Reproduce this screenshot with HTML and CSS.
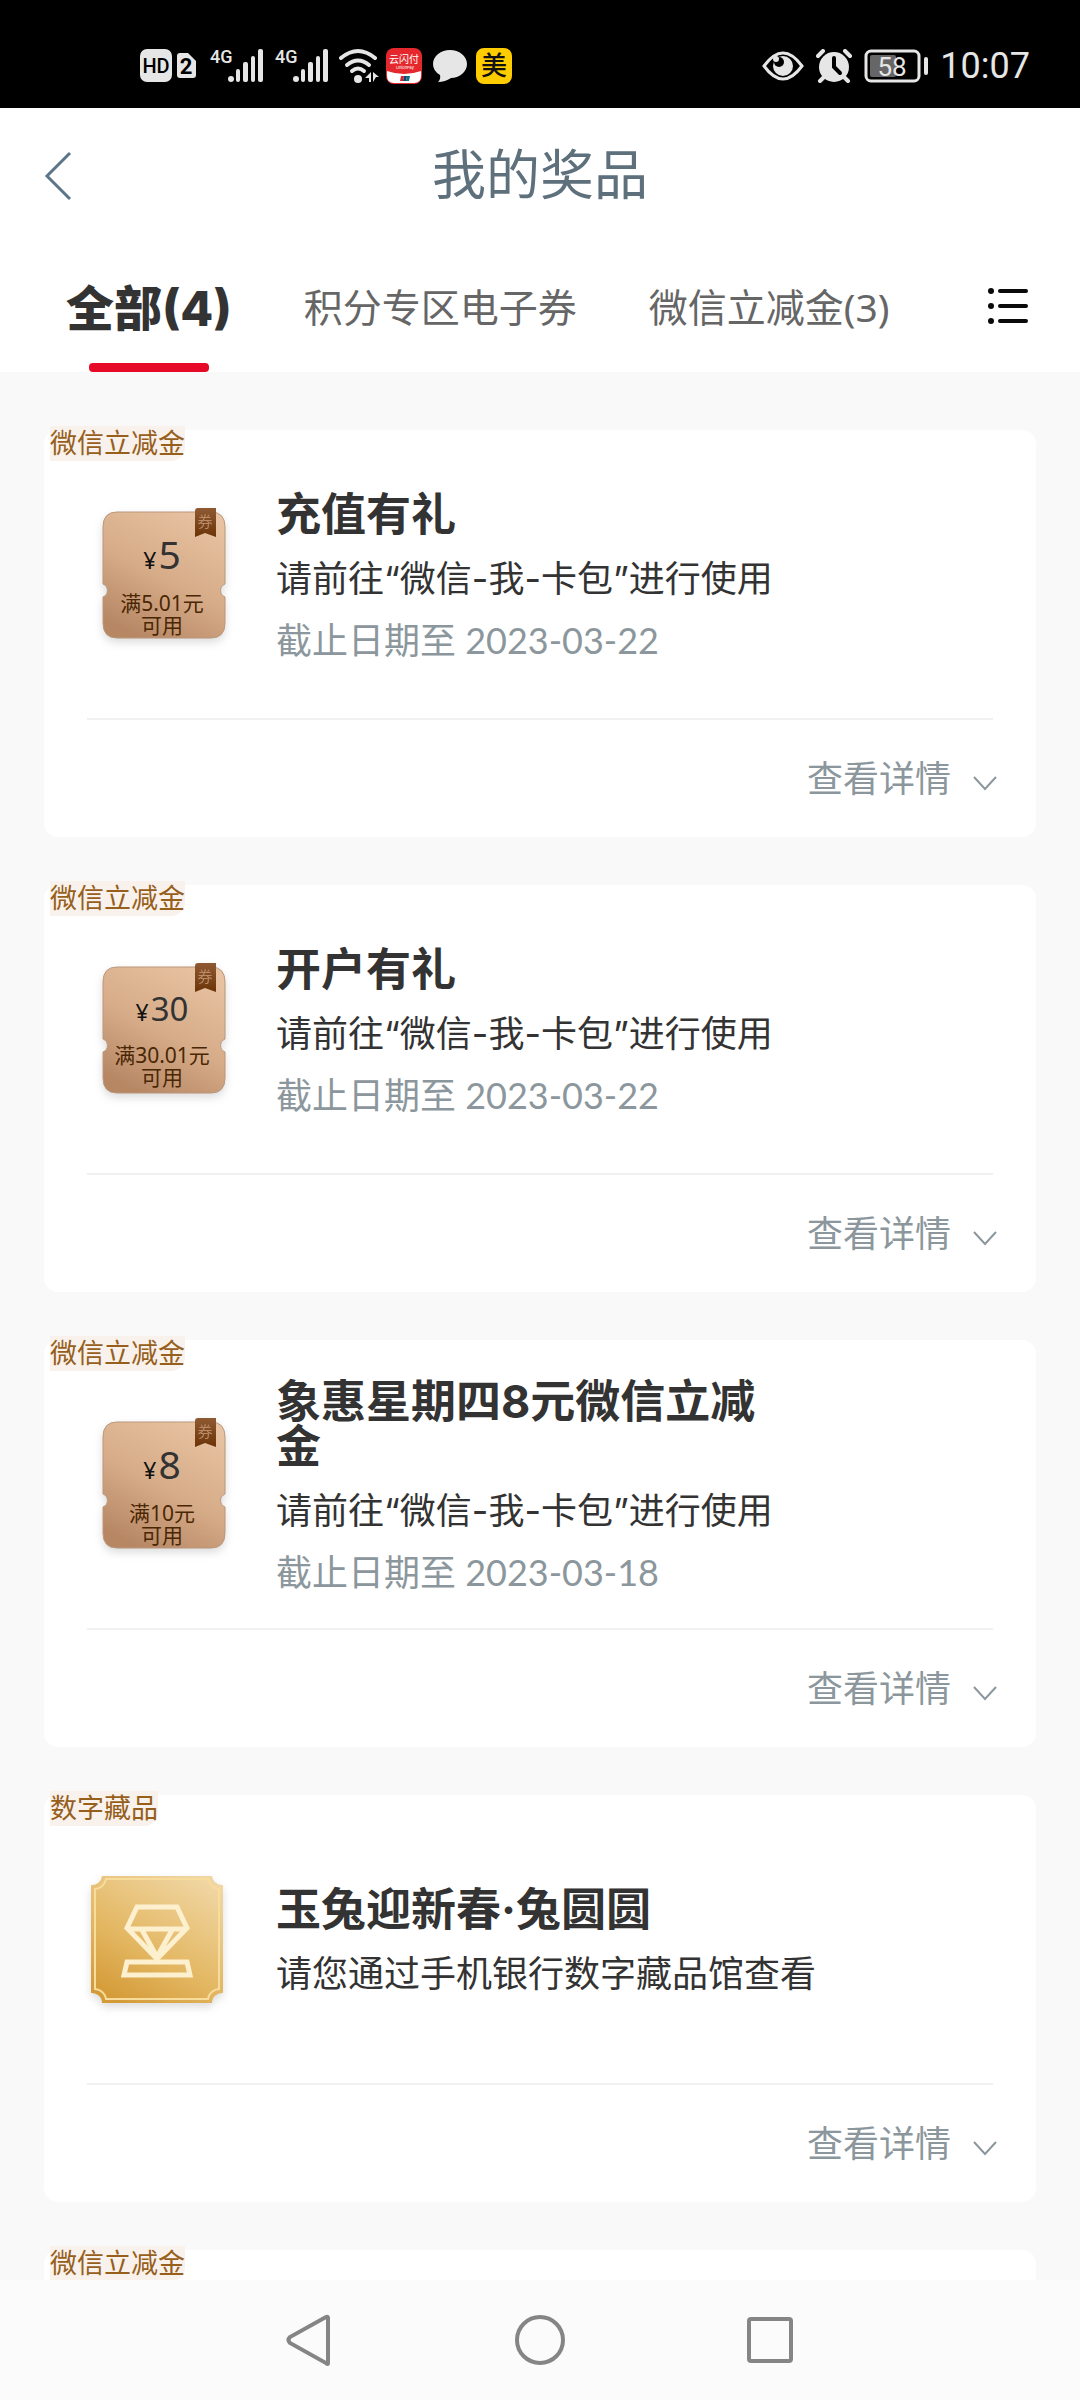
FILE: index.html
```html
<!DOCTYPE html>
<html lang="zh-CN">
<head>
<meta charset="utf-8">
<meta name="viewport" content="width=device-width, initial-scale=1">
<title>我的奖品</title>
<link rel="stylesheet" href="styles.css">
</head>
<body>
<svg class="defs" width="0" height="0" aria-hidden="true">
  <defs>
    <linearGradient id="copper" x1="0.8" y1="0" x2="0.3" y2="1">
      <stop offset="0" stop-color="#e8c3a2"/>
      <stop offset="0.55" stop-color="#d6ab88"/>
      <stop offset="1" stop-color="#b78764"/>
    </linearGradient>
    <linearGradient id="ribbon" x1="0" y1="0" x2="0" y2="1">
      <stop offset="0" stop-color="#8f5a33"/>
      <stop offset="1" stop-color="#6b3407"/>
    </linearGradient>
    <linearGradient id="gold" x1="0.8" y1="0" x2="0.2" y2="1">
      <stop offset="0" stop-color="#f0d6a3"/>
      <stop offset="0.6" stop-color="#e3b762"/>
      <stop offset="1" stop-color="#d49a37"/>
    </linearGradient>
    <symbol id="ticket" viewBox="0 0 140 150">
      <path d="M30 13H124Q138 13 138 28V85A7 7 0 0 0 138 98V124Q138 139 124 139H30Q16 139 16 124V98A7 7 0 0 0 16 85V28Q16 13 30 13Z" fill="url(#copper)" stroke="#b9977c" stroke-width="1"/>
      <path d="M108 12Q108 9 111 9H129V38L118 34L108 38Z" fill="url(#ribbon)"/>
    </symbol>
    <symbol id="signal" viewBox="0 0 54 36">
      <g fill="#e6e6e6"><circle cx="21" cy="31" r="3"/><rect x="26" y="21" width="4" height="13" rx="2"/><rect x="33" y="14" width="5" height="20" rx="2"/><rect x="41" y="8" width="4" height="26" rx="2"/><rect x="48" y="1" width="5" height="33" rx="2"/></g>
      <text x="0" y="15" class="net">4G</text>
    </symbol>
    <symbol id="chevron" viewBox="0 0 24 16"><path d="M1 1L12 13L23 1" fill="none" stroke="#8b979c" stroke-width="2"/></symbol>
  </defs>
</svg>

<div class="status">
  <div class="status-left">
    <svg width="56" height="34" viewBox="0 0 56 34"><rect width="32" height="33" rx="7" fill="#e6e6e6"/><text x="16" y="24" text-anchor="middle" class="hd">HD</text><path d="M42 4H48L56 12V26Q56 29 53 29H40Q37 29 37 26V7Q37 4 40 4Z" fill="#e6e6e6"/><text x="46" y="25" text-anchor="middle" class="sim">2</text></svg>
    <svg class="sig" width="54" height="36"><use href="#signal"/></svg>
    <svg class="sig2" width="54" height="36"><use href="#signal"/></svg>
    <svg class="wifi" width="40" height="36" viewBox="0 0 40 36"><g fill="none" stroke="#e6e6e6" stroke-width="4" stroke-linecap="round"><path d="M2 10Q19 -4 36 10"/><path d="M8 17Q19 8 30 17"/><path d="M13 23Q19 18 25 23"/></g><circle cx="19" cy="31" r="4" fill="#e6e6e6"/><path d="M32 24V34H30V30H26ZM34 24L40 29H37L34 34Z" fill="#e6e6e6"/></svg>
    <svg class="app" width="36" height="36" viewBox="0 0 36 36"><rect width="36" height="36" rx="8" fill="#e5282d"/><path d="M1 23Q18 29 35 23V28Q35 35 28 35H8Q1 35 1 28Z" fill="#fff"/><text x="18" y="15" text-anchor="middle" class="ysf">云闪付</text><text x="19" y="21" text-anchor="middle" class="uni">UnionPay</text><path d="M15 28H18L17 33H14Z" fill="#d22"/><path d="M18 28H21L20 33H17Z" fill="#16407c"/><path d="M21 28H24L23 33H20Z" fill="#0d7377"/></svg>
    <svg class="bubble" width="34" height="34" viewBox="0 0 34 34"><path d="M17 1C26 1 34 7 34 15C34 23 26 29 18 29Q12 33 5 33Q8 30 7 26Q0 22 0 15C0 7 8 1 17 1Z" fill="#e6e6e6"/></svg>
    <span class="mei">美</span>
  </div>
  <div class="status-right">
    <svg width="42" height="30" viewBox="0 0 42 30"><path d="M2 15Q21 -11 40 15Q21 41 2 15Z" fill="none" stroke="#e6e6e6" stroke-width="3"/><circle cx="21" cy="15" r="10" fill="#e6e6e6"/><circle cx="17" cy="11" r="5" fill="#000"/><circle cx="14" cy="8" r="3" fill="#e6e6e6"/></svg>
    <svg width="36" height="34" viewBox="0 0 36 34"><circle cx="18" cy="18" r="15" fill="#e6e6e6"/><path d="M2 7L7 2M34 7L29 2M8 28L4 32M28 28L32 32" stroke="#e6e6e6" stroke-width="4" stroke-linecap="round"/><path d="M18 9V18L24 24" fill="none" stroke="#000" stroke-width="4" stroke-linecap="round"/></svg>
    <svg width="64" height="34" viewBox="0 0 64 34"><rect x="2" y="2" width="53" height="30" rx="5" fill="none" stroke="#e6e6e6" stroke-width="3"/><rect x="6" y="6" width="26" height="22" rx="2" fill="#666"/><rect x="60" y="8" width="4" height="18" rx="2" fill="#e6e6e6"/><text x="28" y="27" text-anchor="middle" class="batt">58</text></svg>
    <span class="clock">10:07</span>
  </div>
</div>

<header class="header">
  <button class="back" aria-label="返回"><svg width="28" height="50" viewBox="0 0 28 50"><path d="M26 2L3 25L26 48" fill="none" stroke="#5b768a" stroke-width="3"/></svg></button>
  <h1>我的奖品</h1>
</header>
<nav class="tabs">
  <button class="tab active">全部(4)</button>
  <button class="tab">积分专区电子券</button>
  <button class="tab">微信立减金(3)</button>
  <button class="menu" aria-label="分类"><svg width="40" height="38" viewBox="0 0 40 38"><g fill="#0a0a0a"><circle cx="3" cy="4" r="3"/><circle cx="3" cy="19" r="3"/><circle cx="3" cy="34" r="3"/><rect x="10" y="2" width="30" height="4" rx="2"/><rect x="10" y="17" width="30" height="4" rx="2"/><rect x="10" y="32" width="30" height="4" rx="2"/></g></svg></button>
</nav>

<main class="list">
  <article class="card">
    <span class="tag">微信立减金</span>
    <div class="body">
      <div class="icon">
        <svg class="shape" viewBox="0 0 140 150"><use href="#ticket"/><text x="118" y="28" text-anchor="middle" class="quan">券</text></svg>
        <div class="face"><p class="amount">¥<b>5</b></p><p class="cond">满5.01元<br>可用</p></div>
      </div>
      <div class="info"><h2>充值有礼</h2><p>请前往“微信-我-卡包”进行使用</p><p class="date">截止日期至 2023-03-22</p></div>
    </div>
    <div class="foot"><button class="more">查看详情<svg width="24" height="16"><use href="#chevron"/></svg></button></div>
  </article>
  <article class="card">
    <span class="tag">微信立减金</span>
    <div class="body">
      <div class="icon">
        <svg class="shape" viewBox="0 0 140 150"><use href="#ticket"/><text x="118" y="28" text-anchor="middle" class="quan">券</text></svg>
        <div class="face"><p class="amount">¥<b class="long">30</b></p><p class="cond">满30.01元<br>可用</p></div>
      </div>
      <div class="info"><h2>开户有礼</h2><p>请前往“微信-我-卡包”进行使用</p><p class="date">截止日期至 2023-03-22</p></div>
    </div>
    <div class="foot"><button class="more">查看详情<svg width="24" height="16"><use href="#chevron"/></svg></button></div>
  </article>
  <article class="card">
    <span class="tag">微信立减金</span>
    <div class="body">
      <div class="icon">
        <svg class="shape" viewBox="0 0 140 150"><use href="#ticket"/><text x="118" y="28" text-anchor="middle" class="quan">券</text></svg>
        <div class="face"><p class="amount">¥<b>8</b></p><p class="cond">满10元<br>可用</p></div>
      </div>
      <div class="info"><h2>象惠星期四8元微信立减金</h2><p>请前往“微信-我-卡包”进行使用</p><p class="date">截止日期至 2023-03-18</p></div>
    </div>
    <div class="foot"><button class="more">查看详情<svg width="24" height="16"><use href="#chevron"/></svg></button></div>
  </article>
  <article class="card">
    <span class="tag">数字藏品</span>
    <div class="body">
      <div class="icon">
        <svg class="shape" viewBox="0 0 140 150">
          <path d="M15 12H125A10 10 0 0 0 136 21V129A10 10 0 0 0 125 139H15A10 10 0 0 0 4 129V21A10 10 0 0 0 15 12Z" fill="url(#gold)"/>
          <path d="M19 15H121A12 12 0 0 0 132 25V125A12 12 0 0 0 121 135H19A12 12 0 0 0 8 125V25A12 12 0 0 0 19 15Z" fill="none" stroke="#f8dc9b" stroke-width="2"/>
          <g fill="none" stroke="#fdf0cf" stroke-width="5" stroke-linejoin="miter"><path d="M50 43H90L100 64L70 95L40 64ZM40 65H100M55 66L70 93L85 66"/><path d="M40 98H100L103 111H37Z"/></g>
        </svg>
      </div>
      <div class="info"><h2>玉兔迎新春·兔圆圆</h2><p>请您通过手机银行数字藏品馆查看</p></div>
    </div>
    <div class="foot"><button class="more">查看详情<svg width="24" height="16"><use href="#chevron"/></svg></button></div>
  </article>
  <article class="card">
    <span class="tag">微信立减金</span>
    <div class="body"></div>
  </article>
</main>

<nav class="sysnav">
  <button aria-label="返回"><svg width="50" height="54" viewBox="0 0 50 54"><path d="M43 4V50Q43 52 41 50L5 30Q2 27 5 24L41 4Q43 3 43 5Z" fill="none" stroke="#858585" stroke-width="4"/></svg></button>
  <button aria-label="主页"><svg width="54" height="54" viewBox="0 0 54 54"><circle cx="27" cy="27" r="23" fill="none" stroke="#858585" stroke-width="4"/></svg></button>
  <button aria-label="最近任务"><svg width="54" height="54" viewBox="0 0 54 54"><rect x="6" y="6" width="42" height="42" rx="2" fill="none" stroke="#858585" stroke-width="4"/></svg></button>
</nav>
</body>
</html>
```
FILE: styles.css
```css
* { box-sizing: border-box; margin: 0; padding: 0; }
body {
  height: 100vh;
  display: flex;
  flex-direction: column;
  background: #f9f9f9;
  color: #333;
  font-family: Inter, "Noto Sans CJK SC", sans-serif;
}
button { border: 0; background: none; font: inherit; color: inherit; display: flex; align-items: center; }
svg { display: block; flex: none; }
.defs { position: absolute; }

.status {
  flex: none;
  height: 108px;
  padding: 23px 50px 0 140px;
  display: flex;
  align-items: center;
  justify-content: space-between;
  background: #000;
  color: #e6e6e6;
}
.status-left { display: flex; align-items: center; }
.status-right { display: flex; align-items: center; gap: 12px; }
.sig { margin-left: 14px; }
.sig2 { margin-left: 11px; }
.wifi { margin-left: 10px; }
.app { margin-left: 7px; }
.bubble { margin-left: 11px; }
.mei {
  width: 36px;
  height: 36px;
  margin-left: 9px;
  border-radius: 8px;
  background: #fc0;
  color: #111;
  font-size: 26px;
  font-weight: 500;
  line-height: 36px;
  text-align: center;
}
.net, .hd, .sim, .batt { font-family: Roboto, sans-serif; fill: #e6e6e6; }
.net { font-size: 18px; font-weight: 500; }
.hd { font-size: 20px; font-weight: 500; fill: #000; }
.sim { font-size: 22px; font-weight: 700; fill: #000; }
.batt { font-size: 26px; }
.ysf { font-size: 10px; fill: #fff; }
.uni { font-size: 4px; fill: #fff; }
.clock { font-family: Roboto, sans-serif; font-size: 36px; line-height: 40px; }

.header {
  flex: none;
  height: 136px;
  padding: 0 44px;
  display: grid;
  grid-template-columns: 1fr auto 1fr;
  align-items: center;
  background: #fff;
}
.header h1 { font-size: 54px; font-weight: 400; line-height: 72px; color: #5d707c; }

.tabs {
  flex: none;
  height: 128px;
  padding: 0 52px 0 66px;
  display: flex;
  gap: 72px;
  background: #fff;
  color: #666;
  font-family: "Noto Sans", "Noto Sans CJK SC", sans-serif;
  font-size: 39px;
}
.tab { position: relative; padding-bottom: 6px; white-space: nowrap; }
.tab.active { color: #333; font-family: Inter, "Noto Sans CJK SC", sans-serif; font-size: 48px; font-weight: 800; }
.tab.active::after {
  content: "";
  position: absolute;
  left: 50%;
  bottom: 0;
  width: 120px;
  height: 9px;
  margin-left: -60px;
  border-radius: 4px;
  background: #e60a28;
}
.menu { margin-left: auto; padding-bottom: 4px; }

.list {
  flex: 1;
  min-height: 0;
  overflow: hidden;
  padding: 58px 44px 0;
}
.card {
  position: relative;
  margin-bottom: 48px;
  padding: 0 43px;
  border-radius: 14px;
  background: #fff;
}
.tag {
  position: absolute;
  left: 6px;
  top: -4px;
  height: 35px;
  border-radius: 0 0 14px 0;
  background: #f9f1ec;
  color: #965f1b;
  font-size: 27px;
  line-height: 35px;
}
.body {
  min-height: 288px;
  display: flex;
  align-items: center;
  gap: 49px;
}
.icon { position: relative; flex: none; width: 140px; height: 150px; }
.shape { width: 140px; height: 150px; filter: drop-shadow(0 4px 4px rgba(80, 80, 80, 0.2)); }
.face {
  position: absolute;
  inset: 32px 4px 0 14px;
  color: #4a2704;
  font-family: "Noto Sans", "Noto Sans CJK SC", sans-serif;
  text-align: center;
}
.amount { color: #111; font-size: 23px; line-height: 45px; }
.amount b { margin-left: 2px; color: #333; font-size: 39px; font-weight: 400; }
.amount .long { font-size: 33px; }
.cond { margin-top: 9px; font-size: 21px; line-height: 22px; white-space: nowrap; }
.quan { font-size: 15px; fill: #b98a66; }
.info { padding-top: 14px; }
.info h2 { max-width: 500px; margin-bottom: 12px; font-size: 45px; font-weight: 700; line-height: 45px; }
.info p { font-size: 36px; line-height: 61px; }
.info .date { color: #8b979c; font-family: Lato, "Noto Sans CJK SC", sans-serif; }
.foot {
  height: 119px;
  display: flex;
  align-items: center;
  justify-content: flex-end;
  padding-bottom: 6px;
  border-top: 2px solid #f0f1f1;
}
.more { gap: 22px; color: #8b979c; font-size: 36px; margin-right: -4px; }
.more svg { margin-top: 16px; }

.sysnav {
  flex: none;
  height: 120px;
  display: flex;
  justify-content: center;
  background: #fbfbfb;
}
.sysnav button { width: 230px; justify-content: center; }
```
